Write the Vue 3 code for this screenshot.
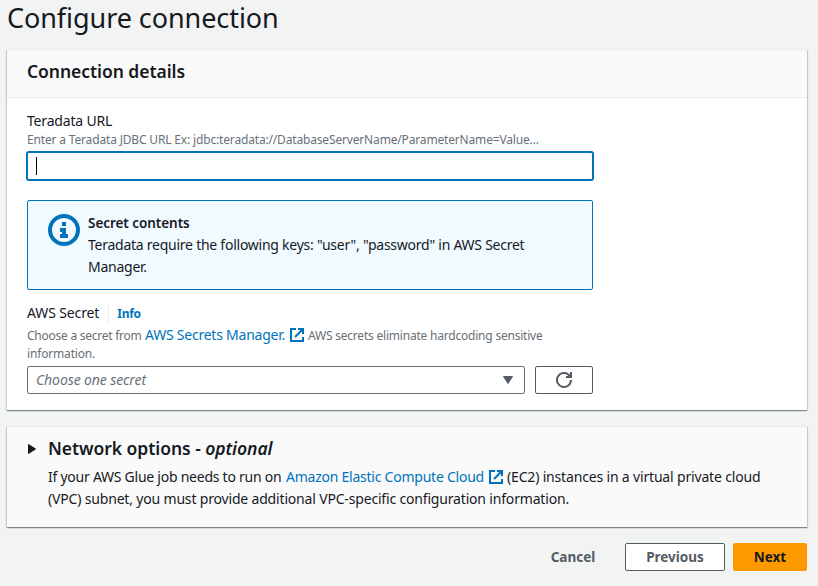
<script setup>
import { ref } from 'vue'

const url = ref('')
</script>

<template>
  <main class="page">
    <h1 class="title">Configure connection</h1>

    <section class="card">
      <header class="card-header"><h2 class="heading details">Connection details</h2></header>
      <div class="card-body">
        <label class="label url-label">Teradata URL</label>
        <p class="hint url-hint">Enter a Teradata JDBC URL Ex: jdbc:teradata://DatabaseServerName/ParameterName=Value...</p>
        <div class="input">{{ url }}<span class="caret"></span></div>

        <div class="alert">
          <svg class="info-icon" viewBox="0 0 32 32" width="32" height="32">
            <circle cx="16" cy="16" r="14" fill="none" stroke="#0073bb" stroke-width="4" />
            <path fill="#0073bb" d="M14 8h4v4h-4zM12 14h6v6h2v4h-8v-4h2v-2h-2z" />
          </svg>
          <div class="alert-text">
            <strong class="alert-title">Secret contents</strong>
            <p>Teradata require the following keys: "user", "password" in AWS Secret<br />Manager.</p>
          </div>
        </div>

        <div class="secret-row">
          <label class="label secret-label">AWS Secret</label>
          <a class="info">Info</a>
        </div>
        <p class="hint secret-hint">
          <span class="hint-a">Choose a secret from</span>
          <a class="link manager">AWS Secrets Manager.</a>
          <svg class="ext" viewBox="0 0 14 14" width="14" height="14">
            <path fill="none" stroke="#0073bb" stroke-width="2" d="M6 1H1v12h12V9M8 1h5v5M13 1L5 9" />
          </svg>
          <span class="hint-b">AWS secrets eliminate hardcoding sensitive</span>
        </p>
        <p class="hint hint-c">information.</p>
        <div class="controls">
          <div class="select">
            <span class="placeholder">Choose one secret</span>
            <svg viewBox="0 0 10 8" width="10" height="8"><path fill="#545b64" stroke="#545b64" stroke-linejoin="round" d="M.5.5h9L5 7.5z" /></svg>
          </div>
          <button class="button refresh" aria-label="Refresh">
            <svg viewBox="0 0 16 16" width="16" height="16">
              <path fill="none" stroke="#545b64" stroke-width="2" d="M15 8A7 7 0 1 1 12.6 2.7L15 5M15 0v5h-5" />
            </svg>
          </button>
        </div>
      </div>
    </section>

    <section class="card network">
      <svg class="arrow" viewBox="0 0 8 10" width="8" height="10"><path fill="#16191f" stroke="#16191f" stroke-linejoin="round" d="M.5.5v9L7.5 5z" /></svg>
      <div>
        <h2 class="heading options">Network options - <em>optional</em></h2>
        <p class="line">
          <span class="net-a">If your AWS Glue job needs to run on</span>
          <a class="link compute">Amazon Elastic Compute Cloud</a>
          <svg class="ext" viewBox="0 0 14 14" width="14" height="14">
            <path fill="none" stroke="#0073bb" stroke-width="2" d="M6 1H1v12h12V9M8 1h5v5M13 1L5 9" />
          </svg>
          <span class="net-b">(EC2) instances in a virtual private cloud</span>
        </p>
        <p class="line net-c">(VPC) subnet, you must provide additional VPC-specific configuration information.</p>
      </div>
    </section>

    <footer class="actions">
      <button class="button cancel">Cancel</button>
      <button class="button previous">Previous</button>
      <button class="button next">Next</button>
    </footer>
  </main>
</template>

<style>
body { background: #f2f3f3; }
</style>

<style scoped>
* { box-sizing: border-box; }
.page {
  height: 586px;
  padding: 0 11px 0 7px;
  overflow: hidden;
  background: #f2f3f3;
  color: #16191f;
  font: 14px/22px "Noto Sans", "Open Sans", sans-serif;
  white-space: nowrap;
}
h1, h2, p { margin: 0; }
.title { height: 50px; padding-top: 1px; font-size: 27px; line-height: 34px; font-weight: 400; letter-spacing: -.07px; }
.card {
  height: 361px;
  background: #fff;
  box-shadow: 0 1px 1px 0 rgba(0, 28, 36, .3), 1px 1px 1px 0 rgba(0, 28, 36, .15), -1px 1px 1px 0 rgba(0, 28, 36, .15);
  border-top: 1px solid #eaeded;
  margin-top: -1px;
}
.card-header { height: 48px; padding: 10px 20px; background: #fafafa; border-bottom: 1px solid #eaeded; }
.heading { font-size: 17.5px; line-height: 22px; font-weight: 600; letter-spacing: -.05px; }
.card-body { padding: 12px 20px 0; }
.label { display: block; font-size: 14px; line-height: 22px; letter-spacing: -.18px; }
.hint { color: #687078; font-size: 12px; line-height: 18px; letter-spacing: -.165px; }
.url-hint { margin-top: -1px; }
.input { display: flex; align-items: center; width: 568px; height: 30px; margin: 2px 0 0 -1px; padding-left: 8px; border: 2px solid #0073bb; border-radius: 3px; }
.caret { width: 1px; height: 18px; background: #000; }
.alert { display: flex; width: 566px; height: 90px; margin-top: 19px; padding: 11px 20px; border: 1px solid #0073bb; border-radius: 2px; background: #f1faff; }
.info-icon { margin-top: 2px; flex: none; }
.alert-text { margin-left: 8px; letter-spacing: -.25px; }
.alert-title { display: block; font-size: 13.5px; font-weight: 600; line-height: 22px; letter-spacing: -.05px; }
.secret-row { display: flex; align-items: center; height: 20px; margin-top: 13px; }
.info { margin-left: 9px; padding: 1px 0 0 8px; border-left: 1px solid #eaeded; color: #0073bb; font-size: 12px; line-height: 18px; font-weight: 700; letter-spacing: -.3px; }
.secret-label { letter-spacing: -.12px; }
.secret-hint { display: flex; align-items: center; height: 22px; margin-top: 1px; }
.link { color: #0073bb; font-size: 14px; }
.ext { margin: 0 4px 0 5px; flex: none; }
.hint-a { width: 118px; padding-top: 1px; letter-spacing: -.25px; }
.hint-b { padding-top: 1px; letter-spacing: -.21px; }
.manager { width: 140px; letter-spacing: -.23px; }
.hint-c { margin-top: -1px; }
.controls { display: flex; gap: 10px; margin-top: 3px; }
.select { display: flex; align-items: center; justify-content: space-between; width: 498px; height: 28px; padding: 0 11px 0 8px; border: 1px solid #687078; border-radius: 2px; }
.placeholder { color: #687078; font-style: italic; letter-spacing: -.1px; }
.button { display: flex; align-items: center; justify-content: center; height: 28px; padding: 0; border: 1px solid #545b64; border-radius: 2px; background: #fff; color: #545b64; font: 700 13.5px/20px "Noto Sans", "Open Sans", sans-serif; }
.refresh { width: 58px; }
.network { display: flex; height: 101px; margin-top: 16px; padding: 10px 21px; background: #fafafa; }
.arrow { width: 8px; margin: 7px 12px 0 0; flex: none; }
.options { margin-bottom: 7px; }
.line { display: flex; align-items: center; height: 22px; }
.net-a { width: 238px; letter-spacing: -.25px; }
.compute { width: 198px; letter-spacing: -.24px; }
.net-b { letter-spacing: -.17px; }
.net-c { letter-spacing: -.175px; }
.actions { display: flex; justify-content: flex-end; margin-top: 16px; }
.cancel { width: 84px; border-color: transparent; background: transparent; margin-right: 10px; }
.previous { width: 100px; margin-right: 8px; }
.next { width: 74px; border-color: #f90; background: #f90; color: #16191f; }
</style>
